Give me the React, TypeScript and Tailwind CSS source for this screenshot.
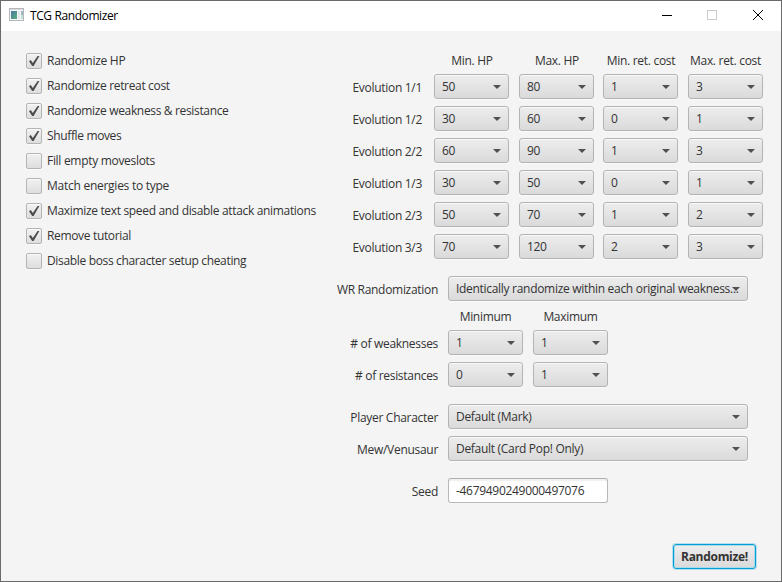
import type { ReactNode } from 'react';

const options = [
  { label: 'Randomize HP', on: true, tracking: 'tracking-[-0.28px]' },
  { label: 'Randomize retreat cost', on: true, tracking: 'tracking-[-0.34px]' },
  { label: 'Randomize weakness & resistance', on: true, tracking: 'tracking-[-0.34px]' },
  { label: 'Shuffle moves', on: true, tracking: 'tracking-[-0.36px]' },
  { label: 'Fill empty moveslots', on: false, tracking: 'tracking-[-0.3px]' },
  { label: 'Match energies to type', on: false, tracking: 'tracking-[-0.26px]' },
  { label: 'Maximize text speed and disable attack animations', on: true, tracking: 'tracking-[-0.33px]' },
  { label: 'Remove tutorial', on: true, tracking: 'tracking-[-0.34px]' },
  { label: 'Disable boss character setup cheating', on: false, tracking: 'tracking-[-0.34px]' },
];

const evolutions = [
  ['Evolution 1/1', '50', '80', '1', '3'],
  ['Evolution 1/2', '30', '60', '0', '1'],
  ['Evolution 2/2', '60', '90', '1', '3'],
  ['Evolution 1/3', '30', '50', '0', '1'],
  ['Evolution 2/3', '50', '70', '1', '2'],
  ['Evolution 3/3', '70', '120', '2', '3'],
];

function Combo({ value, wide = false }: { value: string; wide?: boolean }) {
  return (
    <div
      className={`${wide ? 'w-[300px]' : 'w-[75px]'} flex h-[25px] shrink-0 items-center rounded-[3px] border border-[#b4b4b4] bg-gradient-to-b from-[#ededed] to-[#dadada] pl-[7px] shadow-[inset_0_1px_0_#f8f8f8,0_1px_0_#fafafa]`}
    >
      <span className="w-0 grow whitespace-nowrap leading-[23px]">{value}</span>
      <svg className="mr-[7px] h-1 w-2 shrink-0" viewBox="0 0 8 4">
        <path d="M0 0H8L4 4Z" fill="#505050" />
      </svg>
    </div>
  );
}

function Row({ label, children, className = '' }: { label: string; children: ReactNode; className?: string }) {
  return (
    <div className={`flex h-[25px] ${className}`}>
      <span className="mr-[10px] w-[127px] pt-[2px] text-right leading-[23px]">{label}</span>
      <div className="flex gap-[10px]">{children}</div>
    </div>
  );
}

export default function App() {
  return (
    <div className="flex h-[582px] w-[782px] flex-col overflow-hidden border border-[#6a6a6a] bg-[#f4f4f4] font-['Open_Sans','Noto_Sans',sans-serif] text-[12px] tracking-[-0.3px] text-[#333]">
      <header className="flex h-[30px] shrink-0 items-center bg-white text-black">
        <svg className="-mt-[3px] ml-2 h-[13px] w-[15px] shrink-0" viewBox="0 0 15 13">
          <defs>
            <linearGradient id="pane" x1="0" y1="0" x2="1" y2="1">
              <stop offset="0" stopColor="#4a78a8" />
              <stop offset="1" stopColor="#55b077" />
            </linearGradient>
          </defs>
          <rect x=".5" y=".5" width="14" height="12" fill="#f5f5f5" stroke="#b3b6ba" />
          <path d="M1 1.5H14" stroke="#d9dde0" />
          <rect x="2" y="3" width="6" height="8" fill="url(#pane)" />
          <rect x="9" y="3" width="2" height="8" fill="#e0e6ed" />
          <rect x="12" y="3" width="2" height="4" fill="#9bb8c4" />
          <rect x="12" y="7" width="2" height="4" fill="#c5dfd4" />
        </svg>
        <h1 className="ml-[6px] grow text-[12px] font-normal tracking-[-0.4px]">TCG Randomizer</h1>
        <svg className="h-[30px] w-[138px] shrink-0" viewBox="0 0 138 30" fill="none" shapeRendering="crispEdges">
          <path d="M19 14.5H29" stroke="#000" />
          <rect x="64.5" y="9.5" width="9" height="9" stroke="#cbcbcb" />
          <path d="M110 9L120 19M120 9L110 19" stroke="#000" shapeRendering="auto" />
        </svg>
      </header>

      <main className="flex grow">
        <section className="flex w-[310px] shrink-0 flex-col gap-[9px] pl-[25px] pt-[22px]">
          {options.map((o) => (
            <label key={o.label} className="flex h-4 items-center">
              <span className="flex size-4 shrink-0 items-center justify-center rounded-[2px] border border-[#b4b4b4] bg-gradient-to-b from-[#f1f1f1] to-[#dedede] shadow-[inset_0_1px_0_#fafafa,0_1px_0_#fafafa]">
                {o.on && (
                  <svg className="h-3 w-3 shrink-0" viewBox="0 0 12 12">
                    <path d="M1 6.2L2.8 5L4.8 8L9.6 1H11.4L5.6 11H4.2Z" fill="#4c4c4c" />
                  </svg>
                )}
              </span>
              <span className={`ml-[5px] whitespace-nowrap leading-4 ${o.tracking}`}>{o.label}</span>
            </label>
          ))}
        </section>

        <section className="flex w-[470px] shrink-0 flex-col pb-[12px] pt-[21px]">
          <div className="ml-[123px] flex h-[18px] gap-x-[10px] text-center leading-[18px]">
            <span className="w-[76px]">Min. HP</span>
            <span className="w-[74px]">Max. HP</span>
            <span className="w-[74px] whitespace-nowrap">Min. ret. cost</span>
            <span className="w-[75px] whitespace-nowrap">Max. ret. cost</span>
          </div>
          <div className="mt-1 flex flex-col gap-[7px]">
            {evolutions.map(([name, minHp, maxHp, minCost, maxCost]) => (
              <div key={name} className="flex h-[25px]">
                <span className="mr-3 w-[111px] pt-[2px] text-right leading-[23px]">{name}</span>
                <div className="grid grid-cols-[85px_84px_85px_75px]">
                  <Combo value={minHp} />
                  <Combo value={maxHp} />
                  <Combo value={minCost} />
                  <Combo value={maxCost} />
                </div>
              </div>
            ))}
          </div>

          <Row label="WR Randomization" className="mt-[17px]">
            <Combo wide value="Identically randomize within each original weakness..." />
          </Row>
          <div className="ml-[137px] mt-[7px] flex h-[18px] gap-[10px] text-center leading-[18px]">
            <span className="w-[75px]">Minimum</span>
            <span className="w-[75px]">Maximum</span>
          </div>
          <Row label="# of weaknesses" className="mt-1">
            <Combo value="1" />
            <Combo value="1" />
          </Row>
          <Row label="# of resistances" className="mt-[7px]">
            <Combo value="0" />
            <Combo value="1" />
          </Row>
          <Row label="Player Character" className="mt-[17px]">
            <Combo wide value="Default (Mark)" />
          </Row>
          <Row label="Mew/Venusaur" className="mt-[7px]">
            <Combo wide value="Default (Card Pop! Only)" />
          </Row>
          <Row label="Seed" className="mt-[17px]">
            <input
              className="h-[25px] w-[160px] rounded-[3px] border border-[#b9b9b9] border-t-[#b0b0b0] bg-white px-[7px] shadow-[inset_0_2px_1px_#f0f0f0] outline-none"
              defaultValue="-4679490249000497076"
            />
          </Row>
          <button className="mr-[25px] mt-auto h-[25px] w-[83px] self-end rounded-[3px] border border-[#039ed3] bg-gradient-to-b from-[#ededed] to-[#dadada] font-bold shadow-[0_0_0_1px_#b5dfee,inset_0_0_0_1px_#a8dcec]">
            Randomize!
          </button>
        </section>
      </main>
    </div>
  );
}
